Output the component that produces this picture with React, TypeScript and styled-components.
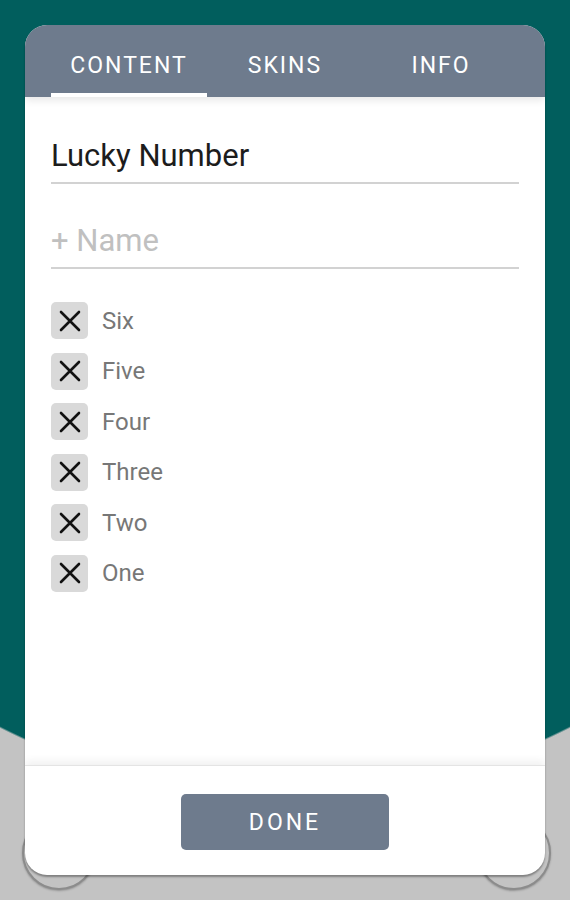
import { useState } from "react";
import styled, { createGlobalStyle } from "styled-components";

const tabs = ["CONTENT", "SKINS", "INFO"];
const numbers = ["Six", "Five", "Four", "Three", "Two", "One"];

function CloseIcon() {
  return (
    <svg width="22" height="22" viewBox="0 0 22 22">
      <path
        d="M2 2L20 20M20 2L2 20"
        stroke="#111"
        strokeWidth="2.6"
        strokeLinecap="round"
        fill="none"
      />
    </svg>
  );
}

function App() {
  const [activeTab, setActiveTab] = useState<number>(0);
  const [items, setItems] = useState<string[]>(numbers);

  const removeItem = (name: string) => {
    setItems(items.filter((item) => item !== name));
  };

  return (
    <Page>
      <GlobalStyle />
      <Wheel $side="left" />
      <Wheel $side="right" />
      <Dialog>
        <Header>
          {tabs.map((tab, i) => (
            <Tab key={tab} $active={i === activeTab} onClick={() => setActiveTab(i)}>
              {tab}
            </Tab>
          ))}
        </Header>
        <Body>
          <TitleField>Lucky Number</TitleField>
          <NameField>+ Name</NameField>
          <List>
            {items.map((item) => (
              <Row key={item}>
                <RemoveButton onClick={() => removeItem(item)}>
                  <CloseIcon />
                </RemoveButton>
                <Label>{item}</Label>
              </Row>
            ))}
          </List>
        </Body>
        <Footer>
          <DoneButton>DONE</DoneButton>
        </Footer>
      </Dialog>
    </Page>
  );
}

export default App;

const GlobalStyle = createGlobalStyle`
  html, body {
    margin: 0;
    padding: 0;
  }
  body {
    font-family: Roboto, "Noto Sans", sans-serif;
  }
`;

const Page = styled.div`
  position: relative;
  width: 570px;
  height: 900px;
  overflow: hidden;
  padding-top: 25px;
  box-sizing: border-box;
  background: radial-gradient(
    ellipse 800px 1062px at 285px -264px,
    #015e5d 0,
    #015e5d 99.8%,
    #c3c3c3 100%
  );
  background-color: #c3c3c3;
`;

const Wheel = styled.div<{ $side: "left" | "right" }>`
  position: absolute;
  top: 816px;
  ${({ $side }) => ($side === "left" ? "left: 22px;" : "left: 477px;")}
  width: 70px;
  height: 70px;
  border-radius: 50%;
  border: 2px solid #8c8c8c;
  background: #c3c3c3;
  box-shadow: 0 1px 2px rgba(0, 0, 0, 0.25);
`;

const Dialog = styled.div`
  position: relative;
  width: 520px;
  height: 850px;
  margin-left: 25px;
  border-radius: 22px;
  background: #fff;
  overflow: hidden;
  display: flex;
  flex-direction: column;
  box-shadow: 0 2px 2px rgba(0, 0, 0, 0.35);
`;

const Header = styled.div`
  height: 72px;
  background: #6e7b8d;
  display: grid;
  grid-template-columns: repeat(3, 1fr);
  padding: 0 26px;
  box-shadow: 0 3px 8px rgba(0, 0, 0, 0.1);
  position: relative;
  z-index: 1;
`;

const Tab = styled.div<{ $active: boolean }>`
  display: flex;
  align-items: center;
  justify-content: center;
  color: #fff;
  font-size: 23px;
  font-weight: 400;
  letter-spacing: 2px;
  padding-top: 16px;
  box-sizing: border-box;
  padding-bottom: 4px;
  border-bottom: 4px solid ${({ $active }) => ($active ? "#fff" : "transparent")};
  cursor: pointer;
`;

const Body = styled.div`
  flex: 1;
  padding: 41px 26px 0;
`;

const TitleField = styled.div`
  font-size: 31px;
  line-height: 36px;
  color: #1c1c1c;
  padding-bottom: 8px;
  border-bottom: 2px solid #d2d2d2;
`;

const NameField = styled.div`
  margin-top: 39px;
  font-size: 31px;
  line-height: 36px;
  color: #c0c0c0;
  padding-bottom: 8px;
  border-bottom: 2px solid #d2d2d2;
`;

const List = styled.div`
  margin-top: 33px;
  display: flex;
  flex-direction: column;
  gap: 13.6px;
`;

const Row = styled.div`
  display: flex;
  align-items: center;
  gap: 14px;
`;

const RemoveButton = styled.div`
  width: 37px;
  height: 37px;
  border-radius: 5px;
  background: #d9d9d9;
  display: flex;
  align-items: center;
  justify-content: center;
  cursor: pointer;
`;

const Label = styled.span`
  font-size: 24px;
  color: #777;
`;

const Footer = styled.div`
  height: 110px;
  display: flex;
  justify-content: center;
  padding-top: 28px;
  box-sizing: border-box;
  border-top: 1px solid #e4e4e4;
  box-shadow: 0 -4px 8px rgba(0, 0, 0, 0.06);
`;

const DoneButton = styled.div`
  width: 208px;
  height: 56px;
  border-radius: 5px;
  background: #6e7b8d;
  color: #fff;
  font-size: 23px;
  font-weight: 400;
  letter-spacing: 3px;
  display: flex;
  align-items: center;
  justify-content: center;
  cursor: pointer;
`;
